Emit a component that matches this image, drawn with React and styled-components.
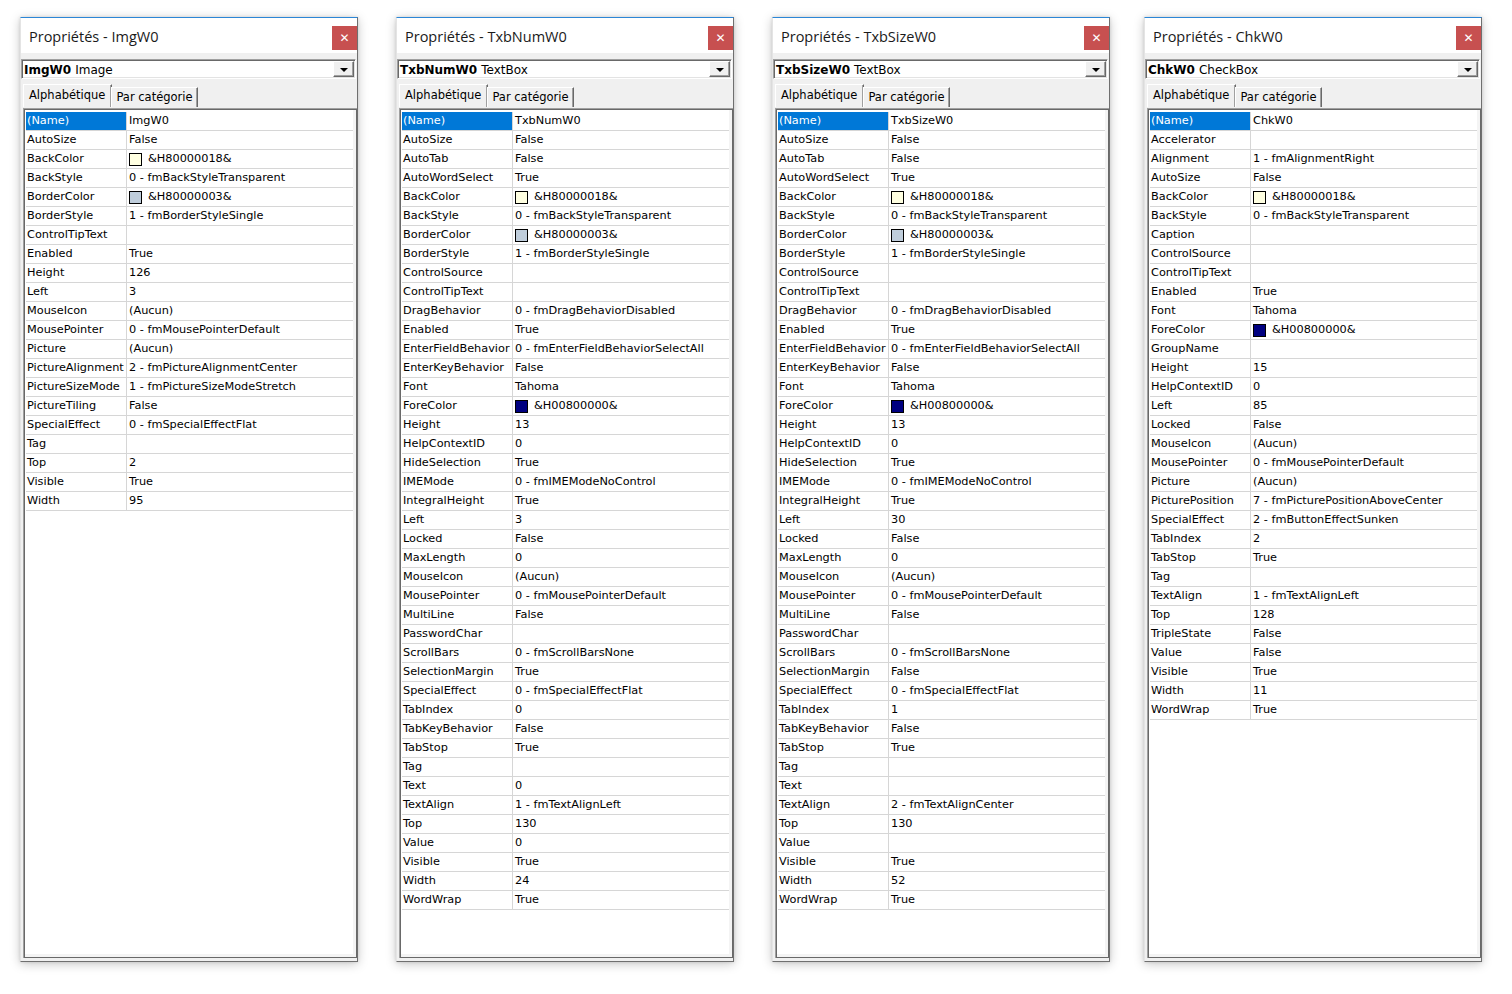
import React from "react";
import styled, { createGlobalStyle } from "styled-components";

const GlobalStyle = createGlobalStyle`
  html, body { margin: 0; padding: 0; background: #ffffff; }
  body { font-family: "DejaVu Sans", sans-serif; }
`;

const Page = styled.div`
  display: flex;
  align-items: flex-start;
  padding-top: 17px;
  width: 1512px;
  height: 994px;
  box-sizing: border-box;
`;

const Window = styled.div`
  margin-left: ${(p) => p.$offset}px;
  width: 338px;
  height: 945px;
  box-sizing: border-box;
  display: flex;
  flex-direction: column;
  background: #f0f0f0;
  border-top: 1px solid #2b86d6;
  border-left: 1px solid #e4e4e4;
  border-right: 1px solid #6f6f6f;
  border-bottom: 1px solid #6f6f6f;
  box-shadow: 0 2px 10px rgba(0, 0, 0, 0.22), 0 0 3px rgba(0, 0, 0, 0.12);
`;

const TitleBar = styled.div`
  height: 35px;
  flex: none;
  background: #ffffff;
  display: flex;
  align-items: flex-start;
  justify-content: space-between;
`;

const TitleText = styled.div`
  font-family: "Open Sans", "Noto Sans", sans-serif;
  font-size: 14.5px;
  color: #1a1a1a;
  padding-left: 8px;
  line-height: 38px;
`;

const CloseBtn = styled.div`
  margin-top: 8px;
  width: 25px;
  height: 24px;
  background: #c75050;
  color: #ffffff;
  display: flex;
  align-items: center;
  justify-content: center;
  font-family: "DejaVu Sans", sans-serif;
  font-size: 12px;
  font-weight: bold;
`;

const Combo = styled.div`
  flex: none;
  margin: 6px 1px 0 0;
  height: 20px;
  box-sizing: border-box;
  background: #ffffff;
  border-top: 1px solid #a0a0a0;
  border-left: 1px solid #a0a0a0;
  border-right: 1px solid #ffffff;
  border-bottom: 1px solid #ffffff;
  box-shadow: inset 1px 1px 0 #696969, inset -1px -1px 0 #e3e3e3;
  display: flex;
  align-items: center;
  padding: 0 1px 0 2px;
  font-size: 12px;
  color: #000;
`;

const ComboLabel = styled.div`
  flex: 1;
  padding-top: 2px;
  white-space: nowrap;
`;

const ComboName = styled.b`
  font-weight: bold;
  margin-right: 4px;
`;

const DropBtn = styled.div`
  width: 21px;
  height: 16px;
  box-sizing: border-box;
  background: #f0f0f0;
  border-top: 1px solid #ffffff;
  border-left: 1px solid #ffffff;
  border-right: 1px solid #696969;
  border-bottom: 1px solid #696969;
  box-shadow: inset -1px -1px 0 #a0a0a0;
  display: flex;
  align-items: center;
  justify-content: center;
`;

const Arrow = styled.div`
  width: 0;
  height: 0;
  border-left: 4px solid transparent;
  border-right: 4px solid transparent;
  border-top: 4px solid #000;
  margin-top: 1px;
`;

const TabRow = styled.div`
  flex: none;
  margin-top: 5px;
  height: 23px;
  padding-left: 2px;
  display: flex;
  align-items: flex-end;
`;

const Tab = styled.div`
  box-sizing: border-box;
  height: ${(p) => (p.$active ? 23 : 20)}px;
  padding: ${(p) => (p.$active ? "0 6px 3px 5px" : "0 4px 1px 4px")};
  background: #f0f0f0;
  border-top: 1px solid #ffffff;
  border-left: 1px solid #ffffff;
  border-right: 1px solid #696969;
  box-shadow: inset -1px 0 0 #a0a0a0;
  display: flex;
  align-items: center;
  font-size: 11.5px;
  color: #000;
  margin-left: ${(p) => (p.$active ? 0 : -1)}px;
`;

const Grid = styled.div`
  flex: 1;
  margin: 1px 0 3px 2px;
  box-sizing: border-box;
  background: #ffffff;
  border-top: 1px solid #a0a0a0;
  border-left: 1px solid #a0a0a0;
  box-shadow: inset 1px 1px 0 #696969, inset -1px -1px 0 #696969, inset -4px -4px 0 #f4f4f4;
  padding: 3px 4px 4px 2px;
  overflow: hidden;
`;

const Row = styled.div`
  display: grid;
  grid-template-columns: ${(p) => p.$nameW}px 1fr;
  height: 19px;
  box-sizing: border-box;
  border-bottom: 1px solid #d6d6d6;
  font-size: 11.3px;
  color: #000;
`;

const NameCell = styled.div`
  box-sizing: border-box;
  border-right: 1px solid #d6d6d6;
  padding-left: 1px;
  line-height: 18px;
  white-space: nowrap;
  overflow: hidden;
  background: ${(p) => (p.$selected ? "#0078d7" : "transparent")};
  color: ${(p) => (p.$selected ? "#ffffff" : "#000")};
`;

const ValueCell = styled.div`
  padding-left: 2px;
  line-height: 18px;
  white-space: nowrap;
  overflow: hidden;
  display: flex;
  align-items: center;
`;

const Swatch = styled.span`
  width: 11px;
  height: 11px;
  border: 1px solid #000;
  background: ${(p) => p.$color};
  margin-right: 6px;
  flex: none;
`;

const SW = {
  info: "#ffffe1",
  inactive: "#bfcddb",
  navy: "#000080",
};

const imgRows = [
  ["(Name)", "ImgW0"],
  ["AutoSize", "False"],
  ["BackColor", "&H80000018&", SW.info],
  ["BackStyle", "0 - fmBackStyleTransparent"],
  ["BorderColor", "&H80000003&", SW.inactive],
  ["BorderStyle", "1 - fmBorderStyleSingle"],
  ["ControlTipText", ""],
  ["Enabled", "True"],
  ["Height", "126"],
  ["Left", "3"],
  ["MouseIcon", "(Aucun)"],
  ["MousePointer", "0 - fmMousePointerDefault"],
  ["Picture", "(Aucun)"],
  ["PictureAlignment", "2 - fmPictureAlignmentCenter"],
  ["PictureSizeMode", "1 - fmPictureSizeModeStretch"],
  ["PictureTiling", "False"],
  ["SpecialEffect", "0 - fmSpecialEffectFlat"],
  ["Tag", ""],
  ["Top", "2"],
  ["Visible", "True"],
  ["Width", "95"],
];

const txbRows = (o) => [
  ["(Name)", o.name],
  ["AutoSize", "False"],
  ["AutoTab", "False"],
  ["AutoWordSelect", "True"],
  ["BackColor", "&H80000018&", SW.info],
  ["BackStyle", "0 - fmBackStyleTransparent"],
  ["BorderColor", "&H80000003&", SW.inactive],
  ["BorderStyle", "1 - fmBorderStyleSingle"],
  ["ControlSource", ""],
  ["ControlTipText", ""],
  ["DragBehavior", "0 - fmDragBehaviorDisabled"],
  ["Enabled", "True"],
  ["EnterFieldBehavior", "0 - fmEnterFieldBehaviorSelectAll"],
  ["EnterKeyBehavior", "False"],
  ["Font", "Tahoma"],
  ["ForeColor", "&H00800000&", SW.navy],
  ["Height", "13"],
  ["HelpContextID", "0"],
  ["HideSelection", "True"],
  ["IMEMode", "0 - fmIMEModeNoControl"],
  ["IntegralHeight", "True"],
  ["Left", o.left],
  ["Locked", "False"],
  ["MaxLength", "0"],
  ["MouseIcon", "(Aucun)"],
  ["MousePointer", "0 - fmMousePointerDefault"],
  ["MultiLine", "False"],
  ["PasswordChar", ""],
  ["ScrollBars", "0 - fmScrollBarsNone"],
  ["SelectionMargin", o.selMargin],
  ["SpecialEffect", "0 - fmSpecialEffectFlat"],
  ["TabIndex", o.tabIndex],
  ["TabKeyBehavior", "False"],
  ["TabStop", "True"],
  ["Tag", ""],
  ["Text", o.text],
  ["TextAlign", o.align],
  ["Top", "130"],
  ["Value", o.value],
  ["Visible", "True"],
  ["Width", o.width],
  ["WordWrap", "True"],
];

const chkRows = [
  ["(Name)", "ChkW0"],
  ["Accelerator", ""],
  ["Alignment", "1 - fmAlignmentRight"],
  ["AutoSize", "False"],
  ["BackColor", "&H80000018&", SW.info],
  ["BackStyle", "0 - fmBackStyleTransparent"],
  ["Caption", ""],
  ["ControlSource", ""],
  ["ControlTipText", ""],
  ["Enabled", "True"],
  ["Font", "Tahoma"],
  ["ForeColor", "&H00800000&", SW.navy],
  ["GroupName", ""],
  ["Height", "15"],
  ["HelpContextID", "0"],
  ["Left", "85"],
  ["Locked", "False"],
  ["MouseIcon", "(Aucun)"],
  ["MousePointer", "0 - fmMousePointerDefault"],
  ["Picture", "(Aucun)"],
  ["PicturePosition", "7 - fmPicturePositionAboveCenter"],
  ["SpecialEffect", "2 - fmButtonEffectSunken"],
  ["TabIndex", "2"],
  ["TabStop", "True"],
  ["Tag", ""],
  ["TextAlign", "1 - fmTextAlignLeft"],
  ["Top", "128"],
  ["TripleState", "False"],
  ["Value", "False"],
  ["Visible", "True"],
  ["Width", "11"],
  ["WordWrap", "True"],
];

const panels = [
  { offset: 20, name: "ImgW0", type: "Image", nameW: 101, rows: imgRows },
  {
    offset: 38,
    name: "TxbNumW0",
    type: "TextBox",
    nameW: 111,
    rows: txbRows({
      name: "TxbNumW0",
      left: "3",
      selMargin: "True",
      tabIndex: "0",
      text: "0",
      align: "1 - fmTextAlignLeft",
      value: "0",
      width: "24",
    }),
  },
  {
    offset: 38,
    name: "TxbSizeW0",
    type: "TextBox",
    nameW: 111,
    rows: txbRows({
      name: "TxbSizeW0",
      left: "30",
      selMargin: "False",
      tabIndex: "1",
      text: "",
      align: "2 - fmTextAlignCenter",
      value: "",
      width: "52",
    }),
  },
  { offset: 34, name: "ChkW0", type: "CheckBox", nameW: 101, rows: chkRows },
];

function PropertiesWindow({ panel }) {
  return (
    <Window $offset={panel.offset}>
      <TitleBar>
        <TitleText>Propriétés - {panel.name}</TitleText>
        <CloseBtn>✕</CloseBtn>
      </TitleBar>
      <Combo>
        <ComboLabel>
          <ComboName>{panel.name}</ComboName>
          {panel.type}
        </ComboLabel>
        <DropBtn>
          <Arrow />
        </DropBtn>
      </Combo>
      <TabRow>
        <Tab $active>Alphabétique</Tab>
        <Tab>Par catégorie</Tab>
      </TabRow>
      <Grid>
        {panel.rows.map(([k, v, color], i) => (
          <Row key={k + i} $nameW={panel.nameW}>
            <NameCell $selected={i === 0}>{k}</NameCell>
            <ValueCell>
              {color && <Swatch $color={color} />}
              {v}
            </ValueCell>
          </Row>
        ))}
      </Grid>
    </Window>
  );
}

export default function App() {
  return (
    <>
      <GlobalStyle />
      <Page>
        {panels.map((p) => (
          <PropertiesWindow key={p.name} panel={p} />
        ))}
      </Page>
    </>
  );
}
